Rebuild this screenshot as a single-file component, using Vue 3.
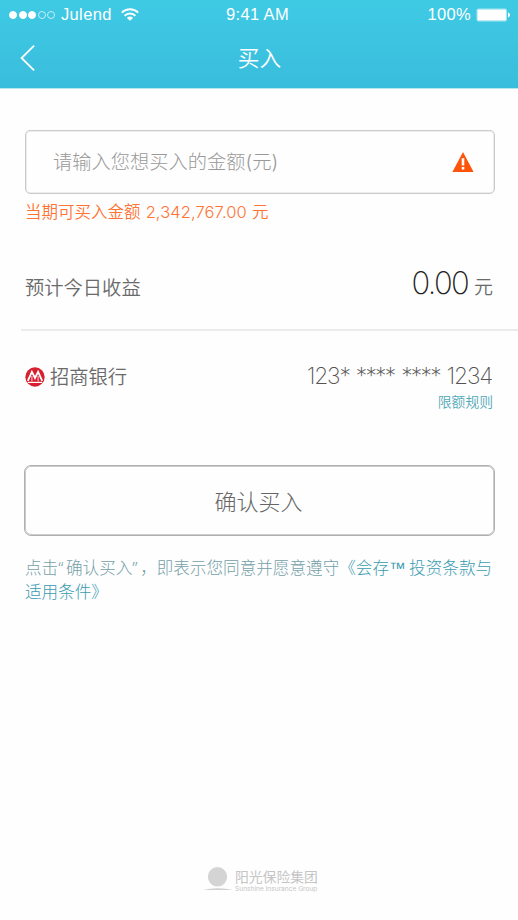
<script setup>
import { ref } from 'vue'

const signal = [true, true, true, false, false]
const amount = ref('')
</script>

<template>
  <div class="screen">
    <header class="top">
      <div class="status">
        <div class="carrier">
          <span class="dots">
            <i v-for="(on, i) in signal" :key="i" class="dot" :class="{ on }"></i>
          </span>
          <span class="name">Julend</span>
          <svg class="wifi" width="18" height="13" viewBox="0 0 18 13" fill="none" stroke="#fff" stroke-width="2">
            <path d="M0.8 4.6C5.4 0.1 12.6 0.1 17.2 4.6" />
            <path d="M3.6 7.7C6.7 4.7 11.3 4.7 14.4 7.7" />
            <path d="M9 12.8L5.9 9.9C7.7 8.1 10.3 8.1 12.1 9.9Z" fill="#fff" stroke="none" />
          </svg>
        </div>
        <span class="time">9:41 AM</span>
        <div class="power">
          <span class="percent">100%</span>
          <svg width="35" height="14" viewBox="0 0 35 14">
            <rect x="0.5" y="0.5" width="30.5" height="13" rx="2" fill="#a9e6f0" />
            <rect x="1.7" y="1.7" width="28.2" height="10.6" rx="0.8" fill="#fff" />
            <path d="M32 4.6C34.6 5.2 34.6 8.8 32 9.4Z" fill="#fff" />
          </svg>
        </div>
      </div>
      <nav class="nav">
        <svg class="back" width="16" height="26" viewBox="0 0 16 26" fill="none" stroke="#fff" stroke-width="1.8" stroke-linecap="round">
          <path d="M13.6 1.2L1.6 13L13.6 24.8" />
        </svg>
        <h1 class="title">买入</h1>
        <span class="side"></span>
      </nav>
    </header>

    <main class="content">
      <label class="field">
        <input v-model="amount" class="input" type="text" placeholder="请输入您想买入的金额(元)" />
        <svg width="22" height="20" viewBox="0 0 22 20">
          <path d="M11 0L21.6 20H0.4Z" fill="#fd540b" />
          <path d="M9.7 6.3H12.3V13.5H9.7ZM9.7 15.1H12.3V17.5H9.7Z" fill="#fff" />
        </svg>
      </label>
      <p class="hint">当期可买入金额 <span class="sum">2,342,767.00</span> 元</p>

      <section class="row income">
        <span class="label">预计今日收益</span>
        <span class="value"><span class="figure">0.00</span><span class="unit">元</span></span>
      </section>

      <section class="row bank">
        <div class="bank-name">
          <svg width="20" height="20" viewBox="0 0 20 20">
            <circle cx="10" cy="10" r="9.7" fill="#d71f30" />
            <path d="M2.8 13.8L6.9 4.8L10 11L13.1 4.8L17.2 13.8" fill="none" stroke="#fff" stroke-width="1.8" />
            <path d="M6.9 9V14.4M13.1 9V14.4" stroke="#fff" stroke-width="0.8" />
            <path d="M2.8 15.4H17.2" stroke="#fff" stroke-width="1.2" />
          </svg>
          <span class="label">招商银行</span>
        </div>
        <div class="account">
          <span class="number">
            <span>123<span class="stars">*</span></span>
            <span class="stars">****</span>
            <span class="stars">****</span>
            <span class="tail">1234</span>
          </span>
          <a class="limit">限额规则</a>
        </div>
      </section>

      <button class="confirm" type="button">确认买入</button>
      <p class="terms">点击<span class="quote">“</span>确认买入<span class="quote">”</span>，即表示您同意并愿意遵守<a class="link">《会存<span class="tm">™</span> 投资条款与<br />适用条件》</a></p>
    </main>

    <footer class="brand">
      <svg width="30" height="25" viewBox="0 0 30 25">
        <circle cx="14.5" cy="10.8" r="9.7" fill="#d4d4d4" />
        <path d="M0 24Q15 20.6 30 24Z" fill="#d0d0d0" />
      </svg>
      <div class="brand-text">
        <span class="brand-cn">阳光保险集团</span>
        <span class="brand-en">Sunshine Insurance Group</span>
      </div>
    </footer>
  </div>
</template>

<style>
body {
  margin: 0;
  background: #fefefe;
}
</style>

<style scoped>
.screen {
  box-sizing: border-box;
  width: 518px;
  height: 920px;
  display: flex;
  flex-direction: column;
  overflow: hidden;
  background: #fefefe;
  font-family: Inter, "Noto Sans CJK SC", sans-serif;
  font-weight: 350;
}
.top {
  height: 89px;
  background: linear-gradient(#3fcae4, #39bddc);
  border-bottom: 1px solid #b5e5f0;
  box-sizing: border-box;
  color: #fff;
}
.status {
  height: 29px;
  padding: 0 7px 0 9px;
  display: grid;
  grid-template-columns: 217px 1fr auto;
  align-items: center;
  font-family: "Liberation Sans", sans-serif;
  font-size: 16.5px;
  font-weight: 400;
}
.carrier, .power, .dots {
  display: flex;
  align-items: center;
}
.dots {
  gap: 1.6px;
}
.dot {
  box-sizing: border-box;
  width: 8px;
  height: 8px;
  border: 1px solid #c5eff6;
  border-radius: 50%;
}
.dot.on {
  background: #fff;
  border-color: #fff;
}
.name {
  margin-left: 5.5px;
  letter-spacing: 0.4px;
}
.time {
  letter-spacing: 0.35px;
}
.wifi {
  margin: 0 0 1px 9px;
}
.power {
  justify-content: flex-end;
  gap: 5px;
}
.percent {
  letter-spacing: 0.3px;
}
.nav {
  height: 58px;
  padding: 0 20px;
  display: flex;
  align-items: center;
  justify-content: space-between;
}
.title {
  margin: 0 0 0 1px;
  font-size: 21.7px;
  font-weight: 350;
  line-height: 30px;
}
.side {
  width: 16px;
}
.content {
  flex: 1;
  padding: 41px 23px 0 25px;
}
.field {
  box-sizing: border-box;
  height: 64px;
  padding: 0 20px 0 27px;
  display: flex;
  align-items: center;
  border: 1px solid #cbcbcb;
  box-shadow: inset 0 0 0 1px #ececec;
  border-radius: 5px;
}
.input {
  flex: 1;
  min-width: 0;
  padding: 0;
  border: 0;
  outline: 0;
  background: none;
  font: inherit;
  font-weight: 300;
  font-size: 19.25px;
  color: #666;
}
.input::placeholder {
  color: #999;
  opacity: 1;
}
.hint {
  margin: 6px 0 0;
  font-size: 16.5px;
  line-height: 24px;
  color: #ff7434;
}
.sum {
  font-weight: 300;
  margin: 0 0.5px;
  letter-spacing: 0.1px;
}
.row {
  display: flex;
  justify-content: space-between;
}
.income {
  box-sizing: border-box;
  height: 106px;
  margin: 1px -23px 0 -4px;
  padding: 40px 25px 0 4px;
  border-bottom: 2px solid #ebebeb;
}
.label {
  font-size: 19.3px;
  line-height: 28px;
  color: #6a6a6a;
}
.income .label {
  margin-top: 9px;
}
.value {
  display: flex;
  align-items: baseline;
  gap: 6px;
  line-height: 36px;
}
.figure {
  font-size: 31px;
  font-weight: 200;
  letter-spacing: -1.7px;
  color: #222;
}
.unit {
  font-size: 19px;
  color: #6a6a6a;
}
.bank {
  height: 134px;
  padding: 32px 2px 0 0;
  box-sizing: border-box;
}
.bank-name {
  height: 28px;
  display: flex;
  align-items: center;
  gap: 5px;
}
.account {
  display: flex;
  flex-direction: column;
  align-items: flex-end;
}
.number {
  display: flex;
  gap: 6.6px;
  margin-top: -1px;
  padding-right: 1px;
  font-size: 22.8px;
  font-weight: 200;
  line-height: 28px;
  letter-spacing: -1.2px;
  color: #555;
}
.stars {
  letter-spacing: -1.7px;
}
.limit {
  margin-top: 1px;
  font-size: 13.8px;
  line-height: 22px;
  color: #54a9b8;
}
.confirm {
  box-sizing: border-box;
  display: block;
  width: 471px;
  height: 71px;
  margin-left: -1px;
  padding: 0 2px 2px 0;
  border: 1px solid #b0b0b0;
  box-shadow: inset 0 0 0 1px #cbcbcb;
  border-radius: 7px;
  background: none;
  font: inherit;
  font-weight: 300;
  font-size: 22px;
  color: #666;
}
.terms {
  margin: 20px -10px 0 0;
  font-size: 16.6px;
  font-weight: 300;
  line-height: 24px;
  white-space: nowrap;
  color: #75a0a8;
}
.quote {
  font-family: "Noto Sans", sans-serif;
  line-height: 1;
  letter-spacing: 2.6px;
}
.tm {
  font-family: "Liberation Sans", sans-serif;
  line-height: 1;
  letter-spacing: -1.2px;
}
.link {
  color: #3b9bb0;
}
.brand {
  height: 54px;
  padding-left: 203px;
  display: flex;
  align-items: flex-start;
  gap: 2px;
}
.brand-text {
  padding-top: 2px;
  display: flex;
  flex-direction: column;
  color: #c5c5c5;
}
.brand-cn {
  font-size: 13.8px;
  font-weight: 400;
  line-height: 18px;
}
.brand-en {
  font-size: 6.6px;
  line-height: 6px;
  font-weight: 400;
}
</style>
